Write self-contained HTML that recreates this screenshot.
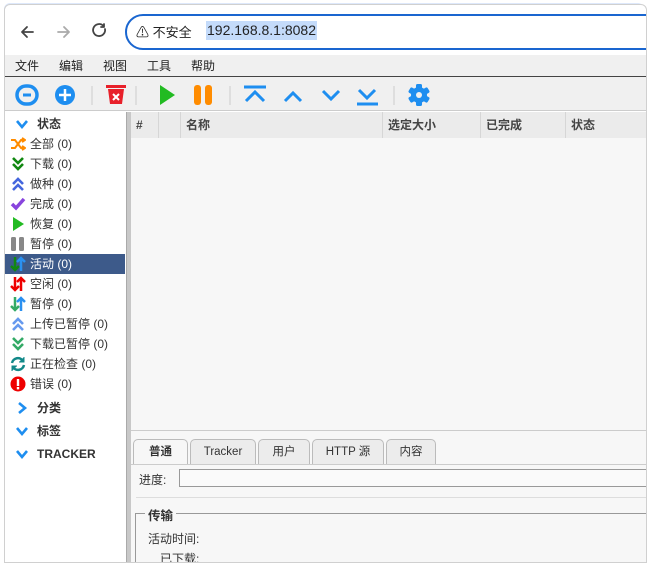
<!DOCTYPE html>
<html><head><meta charset="utf-8"><style>
*{margin:0;padding:0;box-sizing:border-box}
body{width:651px;height:567px;background:#fff;position:relative;overflow:hidden;font-family:"Liberation Sans","Noto Sans CJK SC",sans-serif;font-size:12px;color:#222}
.abs{position:absolute}
.win{left:4px;top:4px;width:643px;height:559px;border:1px solid #d0d0d0;background:#fff;overflow:hidden;border-radius:6px 6px 0 0}
.side div{height:20px;line-height:20px;display:flex;align-items:center;gap:4px;padding-left:5px;font-size:12px;color:#333}
.side svg{flex:none}
.hd{font-weight:bold;gap:8px!important}
.th{position:absolute;top:0;height:26px;line-height:26px;border-right:1px solid #d6d6d6;padding-left:5px;font-weight:bold;color:#444}
.tab{position:absolute;top:434px;height:25px;border:1px solid #bbb;border-bottom:none;border-radius:5px 5px 0 0;background:#ececec;text-align:center;line-height:24px;font-size:11.5px;color:#333}
</style></head><body>
<div class="abs" style="left:4px;top:3px;width:640px;height:6px;background:#dde8fb;border-radius:6px 6px 0 0"></div>
<div class="abs win">
 <div class="abs" style="left:0;top:4px;width:643px;height:46px;background:#fff"></div>
 <svg class="abs" style="left:0;top:0" width="120" height="50" fill="none" stroke-width="1.8" stroke-linecap="round" stroke-linejoin="round">
  <path d="M28 27h-11M22 22l-5 5 5 5" stroke="#444"/>
  <path d="M53 27h11M59 22l5 5-5 5" stroke="#aaa"/>
  <path d="M100 24a6 6 0 1 1-2-3.5M99 19v3h-3" stroke="#444"/>
 </svg>
 <div class="abs" style="left:120px;top:9px;width:540px;height:36px;border:2px solid #1a66d0;border-radius:18px"></div>
 <div class="abs" style="left:131px;top:17px;font-size:13px;color:#222">&#9888; 不安全</div>
 <div class="abs" style="left:201px;top:16px;font-size:14px;background:#c4dbfa;color:#222;padding:0 1px;line-height:19px">192.168.8.1:8082</div>
 <div class="abs" style="left:0;top:50px;width:643px;height:22px;background:#f0f0f0;border-bottom:1px solid #444;font-size:12px;line-height:22px">
  <span class="abs" style="left:10px">文件</span><span class="abs" style="left:54px">编辑</span><span class="abs" style="left:98px">视图</span><span class="abs" style="left:142px">工具</span><span class="abs" style="left:186px">帮助</span>
 </div>
 <div class="abs" style="left:0;top:72px;width:643px;height:34px;background:#f0f0f0;border-bottom:1px solid #ccc"></div>
 <svg class="abs" style="left:0;top:72px" width="643" height="34">
  <rect x="12" y="9" width="20" height="18" rx="9" fill="none" stroke="#1e8ef0" stroke-width="3.5"/>
  <line x1="18" y1="18" x2="26" y2="18" stroke="#1e8ef0" stroke-width="3"/>
  <circle cx="60" cy="18" r="10" fill="#1e8ef0"/><path d="M60 12v12M54 18h12" stroke="#fff" stroke-width="2.5"/>
  <line x1="87" y1="9" x2="87" y2="28" stroke="#ccc"/>
  <rect x="101" y="8" width="20" height="3" fill="#e8202a"/><path d="M103 12h16l-2 15h-12z" fill="#e8202a"/><path d="M108 17l6 6M114 17l-6 6" stroke="#fff" stroke-width="2"/>
  <line x1="131" y1="9" x2="131" y2="28" stroke="#ccc"/>
  <path d="M155 8l15 10-15 10z" fill="#22bb22"/>
  <rect x="189" y="8" width="7" height="20" rx="3" fill="#ff8c00"/><rect x="200" y="8" width="7" height="20" rx="3" fill="#ff8c00"/>
  <line x1="225" y1="9" x2="225" y2="28" stroke="#ccc"/>
  <g fill="none" stroke="#1e8ef0" stroke-width="3"><path d="M239 10h22M241 24l9-9 9 9"/><path d="M280 24l8-8 8 8"/><path d="M318 14l8 8 8-8"/><path d="M354 13l8 8 8-8M352 27h21"/></g>
  <line x1="389" y1="9" x2="389" y2="28" stroke="#ccc"/>
  <g fill="#1e8ef0" transform="translate(414 18)">
   <rect x="-3" y="-11" width="6" height="22" rx="1.5"/><rect x="-3" y="-11" width="6" height="22" rx="1.5" transform="rotate(60)"/><rect x="-3" y="-11" width="6" height="22" rx="1.5" transform="rotate(120)"/>
   <circle r="8"/></g>
  <circle cx="414" cy="18" r="3" fill="#f0f0f0"/>
 </svg>
 <div class="abs side" style="left:0;top:109px;width:121px;height:450px;background:#fff">
  <div class="hd" style="padding-left:10px"><svg width="14" height="14"><path d="M2 4l5 6 5-6" fill="none" stroke="#1e8ef0" stroke-width="2.6"/></svg>状态</div>
  <div><svg width="16" height="14" fill="none" stroke="#ff8c00" stroke-width="2"><path d="M1 3h4l6 8h4M1 11h4l6-8h4M12 1l3 2-3 2M12 9l3 2-3 2"/></svg>全部 (0)</div>
  <div><svg width="16" height="14" fill="none" stroke="#118811" stroke-width="2.6"><path d="M3 1l5 5 5-5M3 7l5 5 5-5"/></svg>下载 (0)</div>
  <div><svg width="16" height="14" fill="none" stroke="#4466dd" stroke-width="2.6"><path d="M3 7l5-5 5 5M3 13l5-5 5 5"/></svg>做种 (0)</div>
  <div><svg width="16" height="14" fill="none" stroke="#8844dd" stroke-width="3.5"><path d="M2 7l4 4 8-9"/></svg>完成 (0)</div>
  <div><svg width="16" height="14"><path d="M3 0l11 7-11 7z" fill="#22bb22"/></svg>恢复 (0)</div>
  <div><svg width="16" height="14" fill="#888"><rect x="1" y="0" width="5" height="14" rx="1.5"/><rect x="9" y="0" width="5" height="14" rx="1.5"/></svg>暂停 (0)</div>
  <div style="background:#3d5a8a;color:#fff;width:120px"><svg width="16" height="16" fill="none" stroke-width="2.5"><path d="M5 1v13M1 10l4 4 4-4" stroke="#118811"/><path d="M11 15V2M7 6l4-4 4 4" stroke="#2a90f0"/></svg>活动 (0)</div>
  <div><svg width="16" height="16" fill="none" stroke-width="2.5" stroke="#e00"><path d="M5 1v13M1 10l4 4 4-4"/><path d="M11 15V2M7 6l4-4 4 4"/></svg>空闲 (0)</div>
  <div><svg width="16" height="16" fill="none" stroke-width="2.5"><path d="M5 1v13M1 10l4 4 4-4" stroke="#33aa66"/><path d="M11 15V2M7 6l4-4 4 4" stroke="#2a90f0"/></svg>暂停 (0)</div>
  <div><svg width="16" height="14" fill="none" stroke="#6699ee" stroke-width="2.6"><path d="M3 7l5-5 5 5M3 13l5-5 5 5"/></svg>上传已暂停 (0)</div>
  <div><svg width="16" height="14" fill="none" stroke="#33aa66" stroke-width="2.6"><path d="M3 1l5 5 5-5M3 7l5 5 5-5"/></svg>下载已暂停 (0)</div>
  <div><svg width="16" height="16" fill="none" stroke="#118888" stroke-width="2.5"><path d="M2 7a6 6 0 0 1 11-2M14 9a6 6 0 0 1-11 2"/><path d="M14 1v5h-5M2 15v-5h5" fill="#118888" stroke-width="1"/></svg>正在检查 (0)</div>
  <div><svg width="16" height="16"><circle cx="8" cy="8" r="7.5" fill="#e00"/><rect x="6.8" y="3" width="2.4" height="7" fill="#fff"/><rect x="6.8" y="11" width="2.4" height="2.4" fill="#fff"/></svg>错误 (0)</div>
  <div class="hd" style="padding-left:10px;height:23px;margin-top:2px"><svg width="14" height="14"><path d="M4 2l6 5-6 5" fill="none" stroke="#1e8ef0" stroke-width="2.6"/></svg>分类</div>
  <div class="hd" style="padding-left:10px;height:23px"><svg width="14" height="14"><path d="M2 4l5 6 5-6" fill="none" stroke="#1e8ef0" stroke-width="2.6"/></svg>标签</div>
  <div class="hd" style="padding-left:10px;height:23px"><svg width="14" height="14"><path d="M2 4l5 6 5-6" fill="none" stroke="#1e8ef0" stroke-width="2.6"/></svg>TRACKER</div>
 </div>
 <div class="abs" style="left:121px;top:107px;width:5px;height:452px;background:#c8c8c8;border-left:1px solid #aaa"></div>
 <div class="abs" style="left:126px;top:107px;width:517px;height:323px;background:#f7f7f7">
  <div class="abs" style="left:0;top:0;width:517px;height:26px;background:#ebebeb">
   <div class="th" style="left:0;width:28px">#</div><div class="th" style="left:28px;width:22px"></div><div class="th" style="left:50px;width:202px">名称</div><div class="th" style="left:252px;width:98px">选定大小</div><div class="th" style="left:350px;width:85px">已完成</div><div class="th" style="left:435px;width:82px;border:none">状态</div>
  </div>
 </div>
 <div class="abs" style="left:126px;top:425px;width:517px;height:134px;background:#f7f7f7;border-top:1px solid #ccc"></div>
 <div class="tab" style="left:128px;width:55px;background:#f7f7f7;font-weight:bold;height:26px">普通</div>
 <div class="tab" style="left:185px;width:66px">Tracker</div>
 <div class="tab" style="left:253px;width:52px">用户</div>
 <div class="tab" style="left:307px;width:72px">HTTP 源</div>
 <div class="tab" style="left:381px;width:50px">内容</div>
 <div class="abs" style="left:126px;top:459px;width:517px;height:1px;background:#ccc"></div>
 <div class="abs" style="left:134px;top:466px;font-size:12px;color:#333">进度:</div>
 <div class="abs" style="left:174px;top:464px;width:470px;height:18px;border:1px solid #999;background:#fafafa"></div>
 <div class="abs" style="left:131px;top:492px;width:512px;height:1px;background:#ddd"></div>
 <div class="abs" style="left:130px;top:508px;width:514px;height:60px;border:1px solid #999;border-right:none"></div>
 <div class="abs" style="left:140px;top:500px;background:#f7f7f7;padding:0 3px;font-size:12.5px;font-weight:bold;color:#333">传输</div>
 <div class="abs" style="left:143px;top:525px;font-size:12px;color:#333">活动时间:</div>
 <div class="abs" style="left:155px;top:545px;font-size:12px;color:#333">已下载:</div>
</div>
</body></html>
